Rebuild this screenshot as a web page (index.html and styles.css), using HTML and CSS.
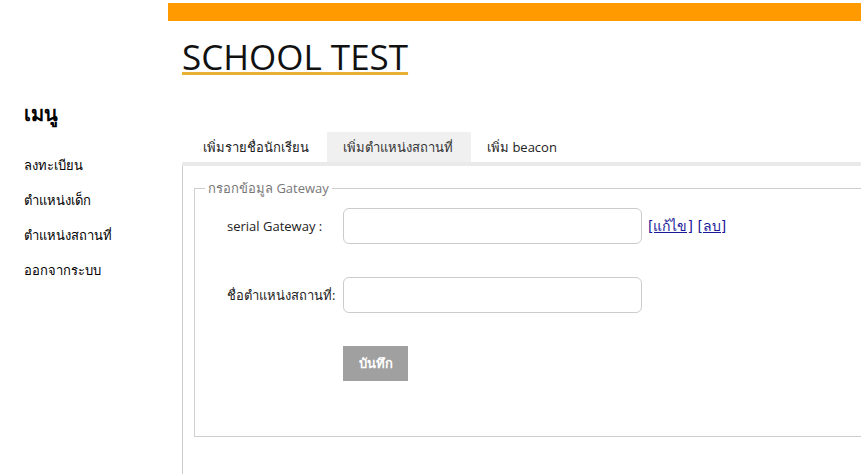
FILE: index.html
```html
<!DOCTYPE html>
<html lang="th">
<head>
<meta charset="utf-8">
<title>SCHOOL TEST</title>
<link rel="stylesheet" href="styles.css">
</head>
<body>
<div class="page">
  <aside class="sidebar">
    <h2 class="menu-title">เมนู</h2>
    <ul class="menu">
      <li><a href="#">ลงทะเบียน</a></li>
      <li><a href="#">ตำแหน่งเด็ก</a></li>
      <li><a href="#">ตำแหน่งสถานที่</a></li>
      <li><a href="#">ออกจากระบบ</a></li>
    </ul>
  </aside>
  <main class="main">
    <div class="topbar"></div>
    <div class="inner">
      <h1 class="title">SCHOOL TEST</h1>
      <nav class="tabs">
        <a class="tab" href="#">เพิ่มรายชื่อนักเรียน</a>
        <a class="tab active" href="#">เพิ่มตำแหน่งสถานที่</a>
        <a class="tab" href="#">เพิ่ม beacon</a>
      </nav>
      <section class="panel">
        <fieldset class="box">
          <legend class="legend">กรอกข้อมูล Gateway</legend>
          <div class="form">
            <label class="label">serial Gateway :</label>
            <input class="field" type="text">
            <span class="links"><a href="#">[แก้ไข]</a> <a href="#">[ลบ]</a></span>
            <label class="label">ชื่อตำแหน่งสถานที่:</label>
            <input class="field" type="text">
            <span></span>
            <span></span>
            <button class="save" type="button">บันทึก</button>
            <span></span>
          </div>
        </fieldset>
      </section>
    </div>
  </main>
</div>
</body>
</html>
```
FILE: styles.css
```css
html, body {
  margin: 0;
  padding: 0;
  height: 100%;
  overflow: hidden;
  background: #fff;
}
body {
  font-family: "Open Sans", "Noto Sans", "DejaVu Sans", sans-serif;
  color: #000;
}
.page {
  display: flex;
  height: 100%;
}
.sidebar {
  width: 144px;
  flex: 0 0 144px;
  padding: 102px 0 0 24px;
}
.menu-title {
  margin: 0 0 28px;
  font-size: 20px;
  font-weight: 600;
  line-height: 24px;
}
.menu {
  list-style: none;
  margin: 0;
  padding: 0;
  display: flex;
  flex-direction: column;
  gap: 15px;
}
.menu li {
  line-height: 20px;
  height: 20px;
}
.menu a {
  color: #000;
  text-decoration: none;
  font-size: 13px;
}
.main {
  flex: 1 1 auto;
  min-width: 0;
  display: flex;
  flex-direction: column;
}
.topbar {
  margin-top: 3px;
  height: 18px;
  background: #ff9a00;
}
.inner {
  padding-left: 14px;
  flex: 1;
  display: flex;
  flex-direction: column;
  min-width: 0;
}
.title {
  margin: 14px 0 0;
  font-size: 35px;
  font-weight: 400;
  line-height: 44px;
  color: #111;
  text-decoration: underline;
  text-decoration-color: #e8b032;
  text-decoration-thickness: 3px;
  text-underline-offset: 2px;
}
.tabs {
  margin-top: 53px;
  display: flex;
  padding-left: 5px;
  border-bottom: 4px solid #eaeaea;
}
.tab {
  display: block;
  padding: 0 18px 0 16px;
  height: 30px;
  line-height: 30px;
  font-size: 13px;
  color: #222;
  text-decoration: none;
}
.tab.active {
  background: #f0f0f0;
  color: #333;
}
.panel {
  flex: 1;
  border-left: 1px solid #cccccc;
  padding: 12px 0 0 11px;
  overflow: hidden;
}
.box {
  margin: 0 -40px 0 0;
  border: 1px solid #cfcfcf;
  padding: 9px 0 55px 32px;
}
.legend {
  margin-left: -22px;
  padding: 0 3px;
  font-size: 13px;
  color: #777;
}
.form {
  display: grid;
  grid-template-columns: 116px 299px auto;
  row-gap: 33px;
  align-items: center;
}
.label {
  font-size: 13px;
  color: #222;
}
.field {
  box-sizing: border-box;
  width: 299px;
  height: 36px;
  border: 1px solid #cccccc;
  border-radius: 6px;
  background: #fff;
  margin: 0;
  padding: 0 8px;
}
.links {
  padding-left: 6px;
  font-family: "DejaVu Sans", "Noto Sans", sans-serif;
  font-size: 14px;
}
.links a {
  color: #1a1a99;
}
.save {
  justify-self: start;
  width: 65px;
  height: 35px;
  border: none;
  background: #a0a0a0;
  color: #fff;
  font-family: inherit;
  font-weight: 700;
  font-size: 13px;
  padding: 0;
}
```
